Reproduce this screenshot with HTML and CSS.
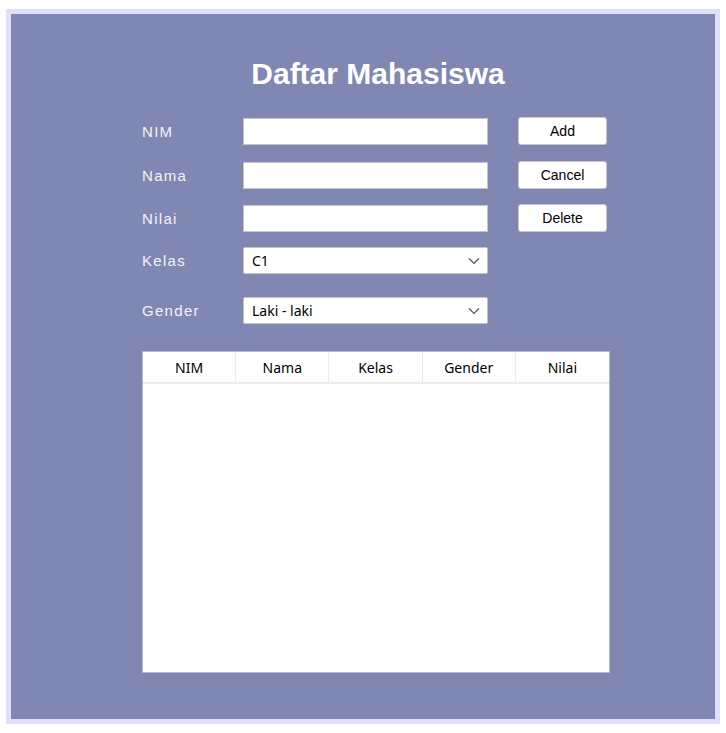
FILE: index.html
```html
<!DOCTYPE html>
<html>
<head>
<meta charset="utf-8">
<title>Daftar Mahasiswa</title>
<link rel="stylesheet" href="styles.css">
</head>
<body>
<div class="frame">
  <div class="panel">
    <div class="content">
      <h1 class="title">Daftar Mahasiswa</h1>
      <div class="row r1">
        <label class="label">NIM</label>
        <div class="input"></div>
        <button class="btn">Add</button>
      </div>
      <div class="row r2">
        <label class="label">Nama</label>
        <div class="input"></div>
        <button class="btn">Cancel</button>
      </div>
      <div class="row r3">
        <label class="label">Nilai</label>
        <div class="input"></div>
        <button class="btn">Delete</button>
      </div>
      <div class="row r4">
        <label class="label">Kelas</label>
        <div class="select"><span>C1</span>
          <svg class="chev" width="12" height="8" viewBox="0 0 12 8"><path d="M1 1.5 L6 6.5 L11 1.5" fill="none" stroke="#555" stroke-width="1.2"/></svg>
        </div>
      </div>
      <div class="row r5">
        <label class="label">Gender</label>
        <div class="select"><span>Laki - laki</span>
          <svg class="chev" width="12" height="8" viewBox="0 0 12 8"><path d="M1 1.5 L6 6.5 L11 1.5" fill="none" stroke="#555" stroke-width="1.2"/></svg>
        </div>
      </div>
      <div class="table">
        <div class="thead">
          <div class="th">NIM</div>
          <div class="th">Nama</div>
          <div class="th">Kelas</div>
          <div class="th">Gender</div>
          <div class="th last">Nilai</div>
        </div>
        <div class="tbody"></div>
      </div>
    </div>
  </div>
</div>
</body>
</html>
```
FILE: styles.css
```css
html, body {
  margin: 0;
  padding: 0;
  background: #ffffff;
}
.frame {
  margin: 9px 0 0 6px;
  width: 714px;
  height: 715px;
  box-sizing: border-box;
  border: 5px solid #e0e0fc;
  background: #7f87b2;
}
.panel {
  padding: 40px 0 0 131px;
}
.content {
  width: 468px;
}
.title {
  margin: 0 0 23px 0;
  height: 40px;
  line-height: 40px;
  text-align: center;
  font-family: "Liberation Sans", Arial, sans-serif;
  font-weight: bold;
  font-size: 30px;
  color: #ffffff;
  padding-left: 4px;
}
.row {
  display: grid;
  grid-template-columns: 71px 245px 89px;
  column-gap: 30px;
  align-items: center;
  height: 27px;
}
.r1 { margin-bottom: 17px; }
.r2 { margin-bottom: 16px; }
.r3 { margin-bottom: 16px; }
.r4 { margin-bottom: 23px; }
.r5 { margin-bottom: 27px; }
.label {
  font-family: "Liberation Sans", Arial, sans-serif;
  font-size: 15px;
  letter-spacing: 1.3px;
  color: #f4f4f8;
}
.input {
  height: 27px;
  box-sizing: border-box;
  background: #fff;
  border: 1px solid #c4c4c8;
}
.btn {
  height: 28px;
  box-sizing: border-box;
  background: #fff;
  border: 1px solid #c8c8cc;
  border-radius: 3px;
  font-family: "Liberation Sans", Arial, sans-serif;
  font-size: 14px;
  color: #000;
  padding: 0;
}
.select {
  height: 27px;
  box-sizing: border-box;
  background: #fff;
  border: 1px solid #c4c4c8;
  border-radius: 2px;
  display: flex;
  align-items: center;
  justify-content: space-between;
  padding: 0 7px 0 8px;
  font-family: "Noto Sans", "Open Sans", sans-serif;
  font-size: 14px;
  color: #000;
}
.chev { display: block; }
.table {
  width: 468px;
  height: 322px;
  box-sizing: border-box;
  border: 1px solid #b4b8cc;
  background: #fff;
  display: flex;
  flex-direction: column;
}
.thead {
  display: grid;
  grid-template-columns: repeat(5, 1fr);
  height: 32px;
  box-sizing: border-box;
  border-bottom: 2px solid #ececec;
}
.th {
  display: flex;
  align-items: center;
  justify-content: center;
  border-right: 1px solid #ececec;
  font-family: "Noto Sans", "Open Sans", sans-serif;
  font-size: 14px;
  color: #000;
}
.th.last { border-right: none; }
.tbody { flex: 1; }
```
